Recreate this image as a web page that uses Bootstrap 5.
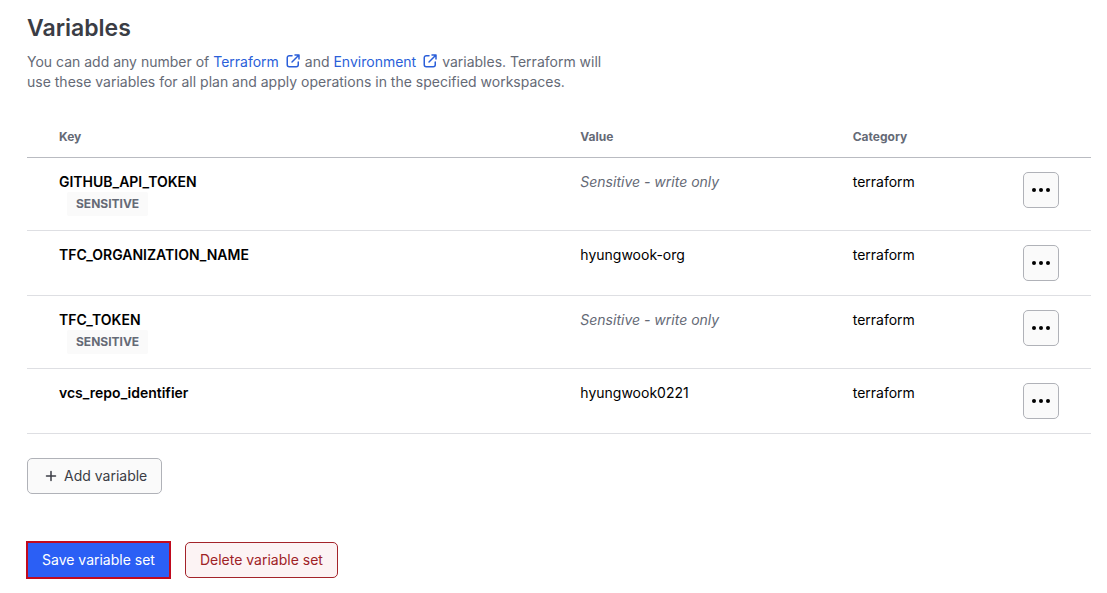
<!DOCTYPE html>
<html lang="en">
<head>
<meta charset="utf-8">
<meta name="viewport" content="width=device-width, initial-scale=1">
<title>Variables</title>
<link href="https://cdn.jsdelivr.net/npm/bootstrap@5.3.0/dist/css/bootstrap.min.css" rel="stylesheet">
<style>
  body { font-family: Inter, "Liberation Sans", sans-serif; font-size: 14px; line-height: 20px; color: #000; background: #fff; }
  .page { padding: 12px 16px 14px 27px; }
  h1 { font-size: 23px; line-height: 32px; font-weight: 600; color: #3b3d45; margin-bottom: 8px; }
  .intro { max-width: 580px; color: #656a76; margin-bottom: 24px; }
  .intro a { color: #2b5fd9; text-decoration: none; }
  .intro svg { margin-left: 6px; vertical-align: -2px; }
  .vars { table-layout: fixed; --bs-table-bg: transparent; --bs-table-color: #000; margin-bottom: 24px; }
  .vars > :not(caption) > * > * { padding: 14px 16px; border-bottom: 1px solid #dedfe3; vertical-align: top; }
  .vars > thead > tr > th { padding: 11px 16px 10px; font-size: 12px; line-height: 20px; font-weight: 700; color: #656a76; border-bottom-color: #b9bbc1; }
  .vars > * > tr > :first-child { padding-left: 32px; }
  .vars > * > tr > :last-child { padding-right: 32px; text-align: right; }
  .vars tbody th { font-weight: 600; }
  .col-key { width: 50.5%; }
  .col-value { width: 25.6%; }
  .tag { width: fit-content; margin-left: 8px; padding: 2px 9px; font-size: 12px; line-height: 20px; font-weight: 700; color: #656a76; background: #fafafa; border-radius: 2px; }
  .hidden-value { color: #656a76; font-style: italic; }
  .btn { --bs-btn-font-size: 14px; --bs-btn-line-height: 20px; --bs-btn-padding-x: 14px; --bs-btn-padding-y: 7px; --bs-btn-border-radius: 5px; }
  .btn-plain { --bs-btn-bg: #fafafa; --bs-btn-color: #3b3d45; --bs-btn-border-color: #b0b2b8; --bs-btn-hover-bg: #fff; --bs-btn-hover-border-color: #8c909c; }
  .btn-more { --bs-btn-padding-x: 7px; --bs-btn-color: #000; width: 36px; height: 36px; }
  .btn-save { --bs-btn-bg: #2b5ff5; --bs-btn-color: #fff; --bs-btn-border-color: #c00a1e; --bs-btn-border-width: 2px; --bs-btn-border-radius: 0; --bs-btn-hover-bg: #1f50dd; --bs-btn-hover-color: #fff; --bs-btn-hover-border-color: #c00a1e; margin-left: -1px; }
  .btn-delete { --bs-btn-bg: #fcf3f4; --bs-btn-color: #9e2226; --bs-btn-border-color: #a3232a; --bs-btn-hover-bg: #fbeaec; --bs-btn-hover-color: #9e2226; --bs-btn-hover-border-color: #a3232a; }
  .actions { gap: 14px; margin-top: 47px; }
</style>
</head>
<body>
<svg class="d-none" xmlns="http://www.w3.org/2000/svg">
  <symbol id="external" viewBox="0 0 16 16"><path d="M7 2.750H4.250A2 2 0 0 0 2.250 4.750V11.750A2 2 0 0 0 4.250 13.750H11.250A2 2 0 0 0 13.250 11.750V9M10 2H14V6M13.500 2.500L7 9" fill="none" stroke="currentColor" stroke-width="1.5" stroke-linecap="round" stroke-linejoin="round"/></symbol>
  <symbol id="dots" viewBox="0 0 20 20"><g fill="currentColor"><circle cx="3" cy="10" r="2"/><circle cx="10" cy="10" r="2"/><circle cx="17" cy="10" r="2"/></g></symbol>
</svg>
<main class="page container-fluid">
  <h1>Variables</h1>
  <p class="intro">You can add any number of <a href="#terraform">Terraform<svg width="16" height="16" aria-hidden="true"><use href="#external"/></svg></a> and <a href="#environment">Environment<svg width="16" height="16" aria-hidden="true"><use href="#external"/></svg></a> variables. Terraform will use these variables for all plan and apply operations in the specified workspaces.</p>

  <table class="table vars">
    <colgroup><col class="col-key"><col class="col-value"><col><col></colgroup>
    <thead>
      <tr><th scope="col">Key</th><th scope="col">Value</th><th scope="col">Category</th><th></th></tr>
    </thead>
    <tbody>
      <tr>
        <th scope="row">GITHUB_API_TOKEN<div class="tag">SENSITIVE</div></th>
        <td class="hidden-value">Sensitive - write only</td>
        <td>terraform</td>
        <td><button type="button" class="btn btn-plain btn-more" aria-label="Actions for GITHUB_API_TOKEN"><svg class="d-block" width="20" height="20" aria-hidden="true"><use href="#dots"/></svg></button></td>
      </tr>
      <tr>
        <th scope="row">TFC_ORGANIZATION_NAME</th>
        <td>hyungwook-org</td>
        <td>terraform</td>
        <td><button type="button" class="btn btn-plain btn-more" aria-label="Actions for TFC_ORGANIZATION_NAME"><svg class="d-block" width="20" height="20" aria-hidden="true"><use href="#dots"/></svg></button></td>
      </tr>
      <tr>
        <th scope="row">TFC_TOKEN<div class="tag">SENSITIVE</div></th>
        <td class="hidden-value">Sensitive - write only</td>
        <td>terraform</td>
        <td><button type="button" class="btn btn-plain btn-more" aria-label="Actions for TFC_TOKEN"><svg class="d-block" width="20" height="20" aria-hidden="true"><use href="#dots"/></svg></button></td>
      </tr>
      <tr>
        <th scope="row">vcs_repo_identifier</th>
        <td>hyungwook0221</td>
        <td>terraform</td>
        <td><button type="button" class="btn btn-plain btn-more" aria-label="Actions for vcs_repo_identifier"><svg class="d-block" width="20" height="20" aria-hidden="true"><use href="#dots"/></svg></button></td>
      </tr>
    </tbody>
  </table>

  <button type="button" class="btn btn-plain d-inline-flex align-items-center gap-1"><svg width="18" height="18" viewBox="0 0 18 18" fill="none" stroke="currentColor" stroke-width="1.5" stroke-linecap="round" aria-hidden="true"><path d="M9 4.500V13.500M4.500 9H13.500"/></svg>Add variable</button>

  <div class="actions d-flex align-items-center">
    <button type="submit" class="btn btn-save">Save variable set</button>
    <button type="button" class="btn btn-delete">Delete variable set</button>
  </div>
</main>
<script src="https://cdn.jsdelivr.net/npm/bootstrap@5.3.0/dist/js/bootstrap.bundle.min.js"></script>
</body>
</html>
